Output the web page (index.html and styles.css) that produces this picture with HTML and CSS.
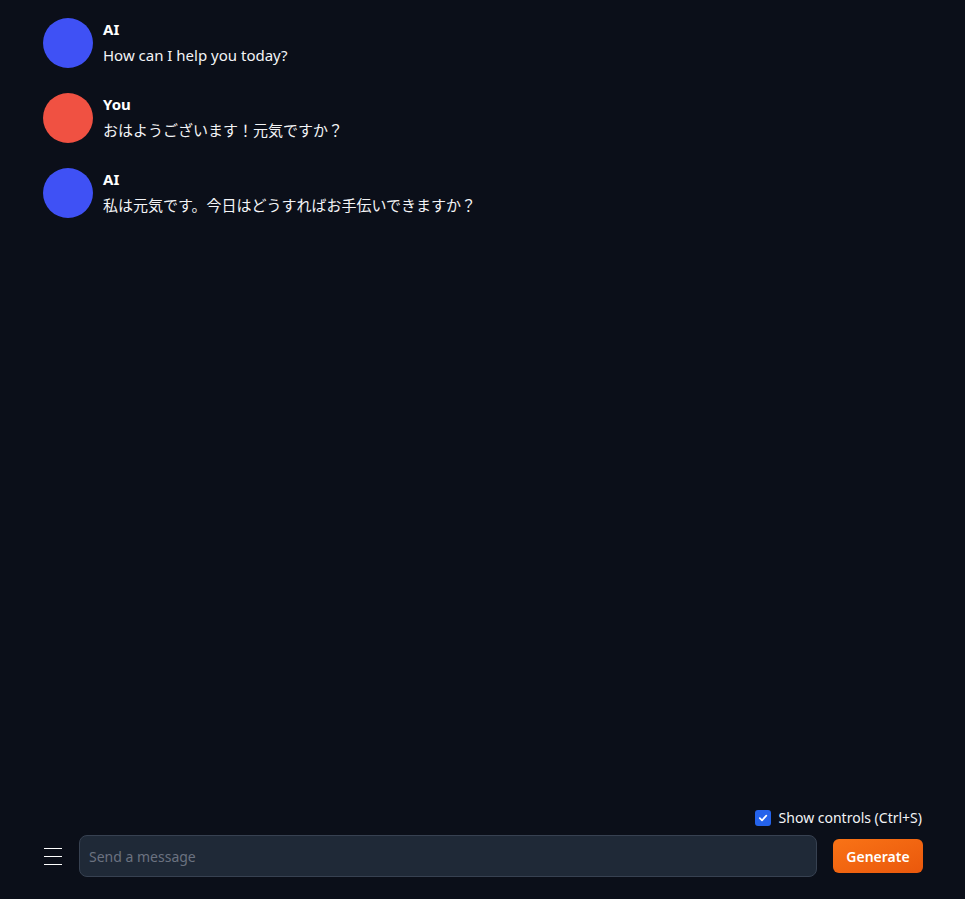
FILE: index.html
```html
<!DOCTYPE html>
<html>
<head>
<meta charset="utf-8">
<link rel="stylesheet" href="styles.css">
</head>
<body>
<div class="app">
  <div class="chat">
    <div class="msg">
      <div class="avatar ai"></div>
      <div class="body">
        <div class="name">AI</div>
        <div class="text">How can I help you today?</div>
      </div>
    </div>
    <div class="msg">
      <div class="avatar you"></div>
      <div class="body">
        <div class="name">You</div>
        <div class="text">おはようございます！元気ですか？</div>
      </div>
    </div>
    <div class="msg">
      <div class="avatar ai"></div>
      <div class="body">
        <div class="name">AI</div>
        <div class="text">私は元気です。今日はどうすればお手伝いできますか？</div>
      </div>
    </div>
  </div>
  <div class="footer">
    <label class="controls">
      <span class="check">
        <svg width="10" height="10" viewBox="0 0 10 10"><path d="M1.8 5.2 L4 7.3 L8.3 2.7" fill="none" stroke="#fff" stroke-width="1.7" stroke-linecap="round" stroke-linejoin="round"/></svg>
      </span>
      <span>Show controls (Ctrl+S)</span>
    </label>
    <div class="inputrow">
      <div class="menu"><span></span><span></span><span></span></div>
      <div class="input">Send a message</div>
      <button class="gen">Generate</button>
    </div>
  </div>
</div>
</body>
</html>
```
FILE: styles.css
```css
html, body {
  margin: 0;
  padding: 0;
  background: #0b0f19;
  font-family: "Noto Sans", "Noto Sans CJK JP", sans-serif;
  color: #f3f4f6;
}
.app {
  height: 899px;
  display: flex;
  flex-direction: column;
  justify-content: space-between;
  padding: 0 42px 0 43px;
  box-sizing: border-box;
}
.chat {
  padding-top: 18px;
  display: flex;
  flex-direction: column;
  gap: 25px;
}
.msg {
  display: flex;
  gap: 10px;
  height: 50px;
}
.avatar {
  width: 50px;
  height: 50px;
  border-radius: 50%;
  flex: none;
}
.avatar.ai { background: #3f51f5; }
.avatar.you { background: #f05142; }
.name {
  font-weight: 700;
  font-size: 15px;
  line-height: 22px;
  color: #ffffff;
}
.text {
  font-size: 15px;
  line-height: 26px;
  margin-top: 2px;
  color: #f3f4f6;
}
.footer {
  padding-bottom: 22px;
  display: flex;
  flex-direction: column;
  align-items: stretch;
}
.controls {
  align-self: flex-end;
  display: flex;
  align-items: center;
  gap: 8px;
  font-size: 14px;
  color: #f3f4f6;
  margin-bottom: 7px;
  margin-right: 1px;
  line-height: 20px;
}
.check {
  width: 16px;
  height: 16px;
  border-radius: 3px;
  background: #2563eb;
  display: flex;
  align-items: center;
  justify-content: center;
}
.inputrow {
  display: flex;
  align-items: center;
  gap: 16px;
}
.menu {
  width: 18px;
  display: flex;
  flex-direction: column;
  gap: 7px;
  margin-left: 1px;
  margin-right: 1px;
}
.menu span {
  display: block;
  height: 1px;
  background: #ffffff;
}
.input {
  flex: 1;
  height: 42px;
  box-sizing: border-box;
  background: #1f2937;
  border: 1px solid #374151;
  border-radius: 8px;
  padding: 0 9px;
  display: flex;
  align-items: center;
  font-size: 14px;
  color: #6b7280;
}
.gen {
  width: 90px;
  height: 34px;
  border: none;
  border-radius: 6px;
  background: linear-gradient(to bottom right, #f97316, #ea580c);
  color: #ffffff;
  font-family: inherit;
  font-weight: 600;
  font-size: 14px;
  padding: 0;
}
```
